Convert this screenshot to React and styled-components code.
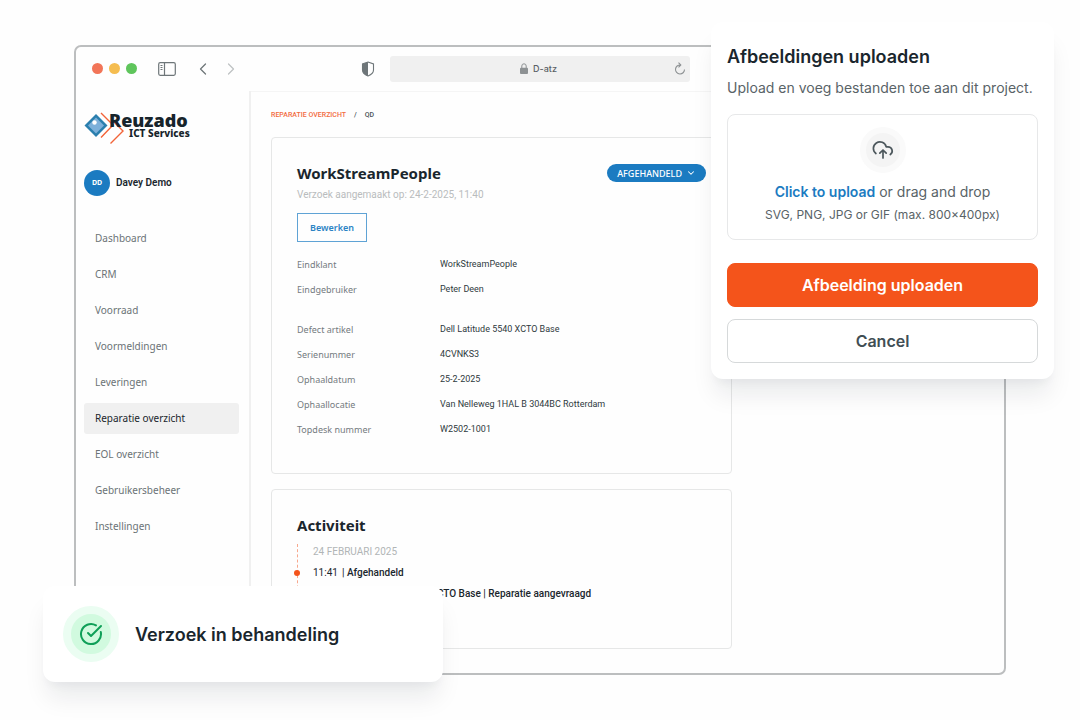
import React from 'react';
import styled, { createGlobalStyle } from 'styled-components';
import { ChevronDown, ChevronLeft, ChevronRight, CircleCheckBig } from 'lucide-react';

const GlobalStyle = createGlobalStyle`
  * {
    box-sizing: border-box;
  }
  body {
    margin: 0;
    background: #fefefe;
    color: #1a262d;
    font-family: 'Noto Sans', 'Open Sans', sans-serif;
  }
  button {
    font-family: inherit;
    cursor: pointer;
  }
  h1, h2, p, ul, ol, dl, dd {
    margin: 0;
    padding: 0;
  }
`;

const Stage = styled.div`
  position: relative;
  padding: 45px 74px;
`;

/* browser window */
const Window = styled.div`
  border: 2px solid #bcbebf;
  border-radius: 7px;
  background: #fefefe;
`;
const Toolbar = styled.header`
  display: grid;
  grid-template-columns: 1fr 300px 1fr;
  align-items: center;
  height: 44px;
  padding-bottom: 1px;
`;
const ToolbarLeft = styled.div`
  display: flex;
  align-items: center;
  padding: 0 15px 0 16px;
`;
const Lights = styled.div`
  display: flex;
  gap: 6px;
  margin-right: 21px;
`;
const Light = styled.span`
  width: 11px;
  height: 11px;
  border-radius: 50%;
  background: ${({ $color }) => $color};
`;
const IconButton = styled.button`
  display: flex;
  padding: 0;
  border: 0;
  background: none;
  color: ${({ $color }) => $color || '#6e7679'};
`;
const History = styled.div`
  display: flex;
  gap: 8px;
  margin-left: 17px;
`;
const ShieldButton = styled(IconButton)`
  margin-left: auto;
`;
const AddressBar = styled.div`
  display: grid;
  grid-template-columns: 1fr auto 1fr;
  align-items: center;
  height: 26px;
  padding: 0 4px;
  border-radius: 3px;
  background: #f0f0f0;
`;
const Address = styled.span`
  grid-column: 2;
  display: flex;
  align-items: center;
  gap: 5px;
  padding-right: 3px;
  color: #5b6165;
  font: 500 9px/12px Inter, sans-serif;
`;
const ReloadButton = styled(IconButton)`
  justify-self: end;
`;

const Body = styled.div`
  display: flex;
`;

/* sidebar */
const Sidebar = styled.aside`
  flex: none;
  width: 175px;
  padding: 18px 10px 0 8px;
  border-right: 2px solid #f0f0f0;
`;
const LogoLink = styled.a`
  display: block;
  height: 36px;
`;
const User = styled.div`
  display: flex;
  align-items: center;
  gap: 6px;
  margin: 25px 0 27px;
  font: 600 10px/26px Roboto, sans-serif;
`;
const Avatar = styled.span`
  width: 26px;
  height: 26px;
  border-radius: 50%;
  background: #1b7bc1;
  color: #fff;
  font: 700 7px/26px 'Noto Sans', sans-serif;
  text-align: center;
`;
const NavList = styled.ul`
  display: grid;
  gap: 5px;
  list-style: none;
`;
const NavLink = styled.a`
  display: block;
  padding: 0 11px;
  border-radius: 3px;
  background: ${({ $active }) => ($active ? '#f0f0f0' : 'transparent')};
  color: ${({ $active }) => ($active ? '#1a262d' : '#6b7376')};
  font-size: 10px;
  line-height: 31px;
  text-decoration: none;
`;

/* page */
const Main = styled.main`
  flex: 1;
  padding: 16px 20px 24px;
  border-top: 1px solid #f5f5f5;
`;
const Breadcrumb = styled.nav`
  display: flex;
  gap: 8px;
  margin-bottom: 14px;
  color: #4a5459;
  font: 500 7px/15px Roboto, sans-serif;
`;
const Crumb = styled.a`
  color: #f26b3f;
  text-decoration: none;
`;
const Card = styled.section`
  max-width: 461px;
  min-height: ${({ $minHeight }) => $minHeight};
  padding: 25px;
  border: 1px solid #e6e7e7;
  border-radius: 4px;

  & + & {
    margin-top: 15px;
  }
`;
const CardHeader = styled.div`
  display: flex;
  align-items: center;
  justify-content: space-between;
`;
const CardTitle = styled.h1`
  font-size: 15px;
  font-weight: 700;
  line-height: 20px;
`;
const Status = styled.button`
  display: flex;
  align-items: center;
  gap: 4px;
  height: 18px;
  padding: 0 10px;
  border: 0;
  border-radius: 9px;
  background: #1b7bc1;
  color: #fff;
  font-size: 9px;
  font-weight: 500;
`;
const Created = styled.p`
  margin: 4px 0 11px;
  color: #b9bcbd;
  font: 400 10px/15px Roboto, sans-serif;
`;
const EditButton = styled.button`
  height: 29px;
  padding: 0 12px;
  border: 1px solid #5fa3d5;
  background: #fefefe;
  color: #2b83c4;
  font-size: 9px;
  font-weight: 600;
`;
const Details = styled.dl`
  display: grid;
  grid-template-columns: 143px 1fr;
  margin-top: ${({ $gap }) => $gap};
  line-height: 25px;
`;
const Term = styled.dt`
  color: #747b7e;
  font-size: 9px;
`;
const Value = styled.dd`
  color: #2f3a40;
  font-family: Roboto, sans-serif;
  font-size: 9px;
  line-height: 24px;
`;

const Timeline = styled.div`
  margin-top: 9px;
  padding-left: 15px;
  border-left: 1px dashed #f7a88d;
`;
const TimelineDate = styled.p`
  color: #b1b5b6;
  font: 400 10px/15px Roboto, sans-serif;
`;
const Events = styled.ol`
  padding-top: 3px;
  list-style: none;
`;
const Event = styled.li`
  position: relative;
  display: flex;
  font: 500 10px/21px Roboto, sans-serif;

  &:first-child::before {
    content: '';
    position: absolute;
    top: 8px;
    left: -19px;
    width: 6px;
    height: 6px;
    border-radius: 50%;
    background: #f4541b;
  }
`;
const Time = styled.time`
  width: 29px;
  font-weight: 400;
`;

/* floating panels */
const Floating = styled.section`
  position: absolute;
  border-radius: 12px;
  background: #fff;
  box-shadow: 0 20px 24px -4px rgba(16, 24, 40, 0.08), 0 8px 8px -4px rgba(16, 24, 40, 0.04);
  font-family: Inter, sans-serif;
`;
const UploadPanel = styled(Floating)`
  top: 22px;
  right: 26px;
  width: 343px;
  padding: 21px 16px 16px;
`;
const PanelTitle = styled.h2`
  font-size: 18px;
  font-weight: 600;
  line-height: 28px;
`;
const PanelText = styled.p`
  margin: 6px 0 15px;
  color: #596367;
  font-size: 14px;
  line-height: 22px;
`;
const DropZone = styled.div`
  display: flex;
  flex-direction: column;
  align-items: center;
  height: 126px;
  margin-bottom: 23px;
  padding-top: 12px;
  border: 1px solid #e7e8e9;
  border-radius: 8px;
  color: #596367;
  font-size: 14px;
  line-height: 24px;
`;
const Halo = styled.span`
  display: flex;
  align-items: center;
  justify-content: center;
  width: ${({ $size }) => $size};
  height: ${({ $size }) => $size};
  border: ${({ $ring }) => $ring} solid ${({ $outer }) => $outer};
  border-radius: 50%;
  background: ${({ $inner }) => $inner};
  color: ${({ $color }) => $color};
`;
const DropText = styled.p`
  margin-top: 7px;
`;
const UploadLink = styled.button`
  padding: 0;
  border: 0;
  background: none;
  color: #1b7bc1;
  font-size: 14px;
  font-weight: 600;
`;
const DropHint = styled.p`
  font-size: 12px;
  line-height: 21px;
`;
const PanelButton = styled.button`
  display: block;
  width: 100%;
  height: 44px;
  border: 1px solid ${({ $primary }) => ($primary ? '#f4541b' : '#d6d9da')};
  border-radius: 8px;
  background: ${({ $primary }) => ($primary ? '#f4541b' : '#fff')};
  color: ${({ $primary }) => ($primary ? '#fff' : '#414e54')};
  font-size: 16px;
  font-weight: 600;

  & + & {
    margin-top: 12px;
  }
`;
const Toast = styled(Floating)`
  bottom: 38px;
  left: 43px;
  display: flex;
  align-items: center;
  gap: 16px;
  width: 400px;
  height: 96px;
  padding: 0 20px;
  font-size: 18px;
  font-weight: 600;
`;

const navItems = [
  'Dashboard',
  'CRM',
  'Voorraad',
  'Voormeldingen',
  'Leveringen',
  'Reparatie overzicht',
  'EOL overzicht',
  'Gebruikersbeheer',
  'Instellingen',
];

const customer = [
  ['Eindklant', 'WorkStreamPeople'],
  ['Eindgebruiker', 'Peter Deen'],
];

const device = [
  ['Defect artikel', 'Dell Latitude 5540 XCTO Base'],
  ['Serienummer', '4CVNKS3'],
  ['Ophaaldatum', '25-2-2025'],
  ['Ophaallocatie', 'Van Nelleweg 1HAL B 3044BC Rotterdam'],
  ['Topdesk nummer', 'W2502-1001'],
];

function Logo() {
  return (
    <svg width="108" height="36" viewBox="0 0 108 36" role="img" aria-label="Reuzado ICT Services">
      <path d="M12 5 23.500 16.500 12 28 0.500 16.500Z" fill="#2a7fae" />
      <path d="M12 8.500 20 16.500 12 24.500 4 16.500Z" fill="#7db0da" />
      <circle cx="10.500" cy="13.500" r="2.200" fill="#fff" />
      <path d="m17 4 12 12-12 12.500M29 12l10 10-12.500 12.500" fill="none" stroke="#f26338" strokeWidth="1.400" />
      <text x="25" y="18" fill="#17242b" fontFamily="Noto Sans" fontSize="18" fontWeight="900">Reuzado</text>
      <text x="45" y="28" fill="#17242b" fontFamily="Noto Sans" fontSize="10" fontWeight="800">ICT Services</text>
    </svg>
  );
}

function PanelIcon() {
  return (
    <svg width="18" height="14" viewBox="0 0 18 14" fill="none" stroke="currentColor" strokeWidth="1.200">
      <rect x="0.700" y="0.700" width="16.600" height="12.600" rx="1.500" />
      <path d="M6.500 1v12M2.500 3.500h2M2.500 5.500h2M2.500 7.500h2" />
    </svg>
  );
}

function ShieldIcon() {
  return (
    <svg width="14" height="16" viewBox="0 0 14 16">
      <path d="M7 1 12.500 3v6c0 3-2.500 4.800-5.500 6-3-1.200-5.500-3-5.500-6V3Z" fill="none" stroke="currentColor" strokeWidth="1.100" />
      <path d="M7 1v14c-3-1.200-5.500-3-5.500-6V3Z" fill="currentColor" />
    </svg>
  );
}

function LockIcon() {
  return (
    <svg width="8" height="11" viewBox="0 0 8 11">
      <rect x="0" y="4.800" width="8" height="6.200" rx="1" fill="#8d9193" />
      <path d="M1.800 5V3a2.200 2.200 0 0 1 4.400 0v2" fill="none" stroke="#8d9193" />
    </svg>
  );
}

function ReloadIcon() {
  return (
    <svg width="12" height="13" viewBox="0 0 12 13" fill="none" stroke="currentColor" strokeWidth="1.100">
      <path d="M6.500 3A4.500 4.500 0 1 0 10.500 7.500M4.500 0.700 6.800 3 4.500 5.300" />
    </svg>
  );
}

function CloudIcon() {
  return (
    <svg
      width="24"
      height="24"
      viewBox="0 0 24 24"
      fill="none"
      stroke="currentColor"
      strokeWidth="1.700"
      strokeLinecap="round"
      strokeLinejoin="round"
    >
      <path d="M4.900 15.500A6.500 6.500 0 1 1 15.200 8.800H17A4.200 4.200 0 0 1 19.300 16.500" />
      <path d="M12 20v-8M8.800 15.200 12 12l3.200 3.200" />
    </svg>
  );
}

function DetailList({ rows, gap }) {
  return (
    <Details $gap={gap}>
      {rows.map(([term, value]) => (
        <React.Fragment key={term}>
          <Term>{term}</Term>
          <Value>{value}</Value>
        </React.Fragment>
      ))}
    </Details>
  );
}

function App() {
  return (
    <>
      <GlobalStyle />
      <Stage>
        <Window>
          <Toolbar>
            <ToolbarLeft>
              <Lights>
                <Light $color="#f27558" />
                <Light $color="#f5bd50" />
                <Light $color="#5fc55c" />
              </Lights>
              <IconButton aria-label="Zijbalk"><PanelIcon /></IconButton>
              <History>
                <IconButton aria-label="Vorige"><ChevronLeft size={20} strokeWidth={1.5} /></IconButton>
                <IconButton aria-label="Volgende" $color="#bfc2c3"><ChevronRight size={20} strokeWidth={1.5} /></IconButton>
              </History>
              <ShieldButton aria-label="Privacy"><ShieldIcon /></ShieldButton>
            </ToolbarLeft>
            <AddressBar>
              <Address><LockIcon />D-atz</Address>
              <ReloadButton aria-label="Herladen" $color="#8d9193"><ReloadIcon /></ReloadButton>
            </AddressBar>
          </Toolbar>
          <Body>
            <Sidebar>
              <LogoLink href="#"><Logo /></LogoLink>
              <User><Avatar>DD</Avatar>Davey Demo</User>
              <NavList>
                {navItems.map((item) => (
                  <li key={item}>
                    <NavLink href="#" $active={item === 'Reparatie overzicht'}>{item}</NavLink>
                  </li>
                ))}
              </NavList>
            </Sidebar>
            <Main>
              <Breadcrumb>
                <Crumb href="#">REPARATIE OVERZICHT</Crumb>
                <span>/</span>
                <span>QD</span>
              </Breadcrumb>
              <Card $minHeight="337px">
                <CardHeader>
                  <CardTitle>WorkStreamPeople</CardTitle>
                  <Status>AFGEHANDELD <ChevronDown size={10} strokeWidth={2.5} /></Status>
                </CardHeader>
                <Created>Verzoek aangemaakt op: 24-2-2025, 11:40</Created>
                <EditButton>Bewerken</EditButton>
                <DetailList rows={customer} gap="10px" />
                <DetailList rows={device} gap="15px" />
              </Card>
              <Card $minHeight="160px">
                <CardTitle as="h2">Activiteit</CardTitle>
                <Timeline>
                  <TimelineDate>24 FEBRUARI 2025</TimelineDate>
                  <Events>
                    <Event><Time>11:41</Time>| Afgehandeld</Event>
                    <Event><Time>11:40</Time>| Dell Latitude 5540 XCTO Base | Reparatie aangevraagd</Event>
                  </Events>
                </Timeline>
              </Card>
            </Main>
          </Body>
        </Window>

        <UploadPanel>
          <PanelTitle>Afbeeldingen uploaden</PanelTitle>
          <PanelText>Upload en voeg bestanden toe aan dit project.</PanelText>
          <DropZone>
            <Halo $size="46px" $ring="6px" $outer="#fafafa" $inner="#f4f4f4" $color="#4c575c">
              <CloudIcon />
            </Halo>
            <DropText><UploadLink>Click to upload</UploadLink> or drag and drop</DropText>
            <DropHint>SVG, PNG, JPG or GIF (max. 800×400px)</DropHint>
          </DropZone>
          <PanelButton $primary>Afbeelding uploaden</PanelButton>
          <PanelButton>Cancel</PanelButton>
        </UploadPanel>

        <Toast as="div" role="status">
          <Halo $size="56px" $ring="8px" $outer="#ebfdf2" $inner="#d1fadf" $color="#0f9f58">
            <CircleCheckBig size={24} />
          </Halo>
          Verzoek in behandeling
        </Toast>
      </Stage>
    </>
  );
}

export default App;
